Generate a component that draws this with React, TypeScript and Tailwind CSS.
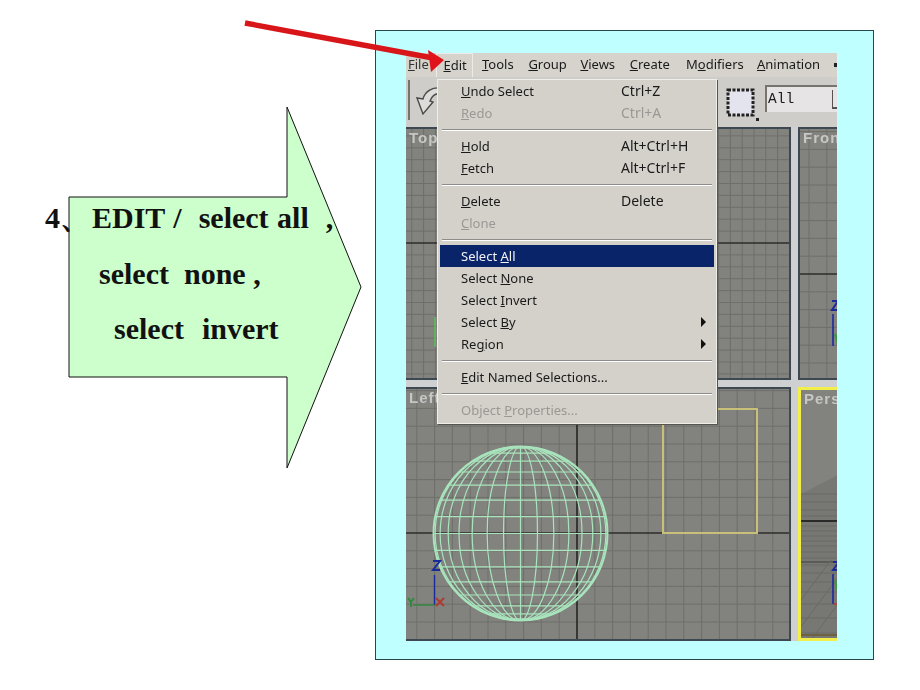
const SERIF = "font-['Liberation_Serif','Times_New_Roman',serif]";

function GridLines({ w, h, ox, oy, stepX = 17.8, stepY = 17.8, axisX, axisY }: { w: number; h: number; ox: number; oy: number; stepX?: number; stepY?: number; axisX?: boolean; axisY?: boolean }) {
  const xs: number[] = [];
  const ys: number[] = [];
  for (let x = ox % stepX; x < w; x += stepX) xs.push(x);
  for (let y = oy % stepY; y < h; y += stepY) ys.push(y);
  return (
    <svg width={w} height={h} className="absolute inset-0">
      {xs.map((x) => (
        <line key={`x${x}`} x1={x} y1={0} x2={x} y2={h} stroke="#6e6e6b" strokeWidth="1" />
      ))}
      {ys.map((y) => (
        <line key={`y${y}`} x1={0} y1={y} x2={w} y2={y} stroke="#6e6e6b" strokeWidth="1" />
      ))}
      {axisX && <line x1={ox} y1={0} x2={ox} y2={h} stroke="#0c0c0c" strokeWidth="1.2" />}
      {axisY && <line x1={0} y1={oy} x2={w} y2={oy} stroke="#0c0c0c" strokeWidth="1.2" />}
    </svg>
  );
}

function Sphere() {
  const c = "#a8e4bc";
  const cx = 114.5;
  const cy = 144.5;
  const r = 87;
  const s = [0.195, 0.383, 0.556, 0.707, 0.831, 0.924, 0.981];
  const lats = [0, ...s, ...s.map((v) => -v)];
  return (
    <svg width="385" height="253" className="absolute inset-0" fill="none" stroke={c} strokeWidth="1.2">
      <circle cx={cx} cy={cy} r={r} strokeWidth="2" />
      <line x1={cx} y1={cy - r} x2={cx} y2={cy + r} />
      {lats.map((l) => {
        const half = Math.sqrt(1 - l * l) * r;
        return <line key={l} x1={cx - half} y1={cy + l * r} x2={cx + half} y2={cy + l * r} />;
      })}
      {s.map((l) => (
        <ellipse key={l} cx={cx} cy={cy} rx={l * r} ry={r} />
      ))}
      <line x1="28.5" y1="186" x2="28.5" y2="216" stroke="#1b2a9a" strokeWidth="1.4" />
      <line x1="7" y1="216" x2="28.5" y2="216" stroke="#2e8a3a" strokeWidth="1.4" />
      <path d="M27 172h7l-7 9h7" stroke="#1b2a9a" strokeWidth="2" />
      <path d="M30 209l8 8M38 209l-8 8" stroke="#b03a30" strokeWidth="2" />
      <path d="M2 209l3 4 3-4M5 213v5" stroke="#2e8a3a" strokeWidth="2" />
    </svg>
  );
}

function Label({ children }: { children: React.ReactNode }) {
  return <span className="absolute left-[3px] top-[-2px] text-[15px] font-bold tracking-[1px] text-[#c6c6c4] font-['Liberation_Sans',sans-serif]">{children}</span>;
}

function Viewport({ className = "", children }: { className?: string; children?: React.ReactNode }) {
  return <div className={`relative overflow-hidden bg-[#82827e] ${className}`}>{children}</div>;
}

type Item = { label: React.ReactNode; shortcut?: string; disabled?: boolean; active?: boolean; sub?: boolean };

function MenuRow({ label, shortcut, disabled, active, sub }: Item) {
  return (
    <div className={`relative flex h-[22px] items-center pl-[21px] ${active ? "bg-[#0a246a] text-[#f2f2f2]" : disabled ? "text-[#9a9894]" : "text-[#1a1a1a]"}`}>
      <span className="mt-[2px] w-[160px] shrink-0">{label}</span>
      {shortcut && <span className="mb-[2px] text-[14px]">{shortcut}</span>}
      {sub && <span className="absolute right-[8px] h-0 w-0 border-y-[5px] border-l-[5px] border-y-transparent border-l-[#111]" />}
    </div>
  );
}

function Sep() {
  return <div className="mx-[2px] mt-[5px] mb-[4px] h-[2px] border-t border-b border-t-[#8e8c88] border-b-white" />;
}

function EditMenu() {
  return (
    <div className="absolute left-[31px] top-[26px] z-10 w-[280px] border border-[#f0eee9] bg-[#d4d1cb] px-[2px] pb-[2px] text-[13px] font-['Noto_Sans',sans-serif] shadow-[1px_1px_0_#55554f]">
      <MenuRow label={<><u>U</u>ndo Select</>} shortcut="Ctrl+Z" />
      <MenuRow label={<><u>R</u>edo</>} shortcut="Ctrl+A" disabled />
      <Sep />
      <MenuRow label={<><u>H</u>old</>} shortcut="Alt+Ctrl+H" />
      <MenuRow label={<><u>F</u>etch</>} shortcut="Alt+Ctrl+F" />
      <Sep />
      <MenuRow label={<><u>D</u>elete</>} shortcut="Delete" />
      <MenuRow label={<><u>C</u>lone</>} disabled />
      <Sep />
      <MenuRow label={<>Select <u>A</u>ll</>} active />
      <MenuRow label={<>Select <u>N</u>one</>} />
      <MenuRow label={<>Select <u>I</u>nvert</>} />
      <MenuRow label={<>Select <u>B</u>y</>} sub />
      <MenuRow label={<>Re<u>g</u>ion</>} sub />
      <Sep />
      <MenuRow label={<><u>E</u>dit Named Selections...</>} />
      <Sep />
      <MenuRow label={<>Object <u>P</u>roperties...</>} disabled />
    </div>
  );
}

function AppShot() {
  return (
    <div className="relative flex h-[588px] w-[431px] flex-col overflow-hidden bg-[#d4d1cb] font-['Noto_Sans',sans-serif] text-[13px] text-[#1a1a1a] blur-[0.4px]">
      <div className="flex h-[24px] shrink-0 items-center whitespace-nowrap bg-[#d6d3cd]">
        <span className="ml-[2px] w-[29px] text-[#333]"><u>F</u>ile</span>
        <span className="h-[24px] w-[37px] border border-b-0 border-[#ecebe6] pl-[6px] leading-[23px]"><u>E</u>dit</span>
        <span className="ml-[9px] w-[33px]"><u>T</u>ools</span>
        <span className="ml-[14px] w-[38px]"><u>G</u>roup</span>
        <span className="ml-[14px] w-[36px]"><u>V</u>iews</span>
        <span className="ml-[14px] w-[43px]"><u>C</u>reate</span>
        <span className="ml-[14px] w-[57px]">M<u>o</u>difiers</span>
        <span className="ml-[14px] w-[61px]"><u>A</u>nimation</span>
        <span className="ml-[16px] h-[4px] w-[3px] shrink-0 bg-[#222]" />
      </div>
      <div className="relative h-[50px] shrink-0 bg-[#cfcdc9]">
        <div className="absolute left-[2px] top-[3px] h-[40px] w-[2px] bg-[#77736d]" />
        <svg width="24" height="30" viewBox="0 0 24 30" className="absolute left-[10px] top-[9px]">
          <path d="M7 28 L1 12 L7 13 C9 5 17 1 24 2 L24 8 C19 7 16 10 14 15 L17 16 Z" fill="#dcdcda" stroke="#4c4a47" strokeWidth="1.4" />
        </svg>
        <svg width="33" height="33" viewBox="0 0 33 33" className="absolute left-[320px] top-[11px]">
          <rect x="2" y="2" width="25" height="25" fill="#e4e4ee" stroke="#222" strokeWidth="3" strokeDasharray="3 1.5" />
          <rect x="30" y="30" width="3" height="3" fill="#222" />
        </svg>
        <div className="absolute left-[359px] top-[8px] flex h-[27px] w-[72px] items-center border-l-2 border-t-2 border-[#77736d] bg-[#e6e4e4] pl-[1px] font-['Liberation_Mono',monospace] text-[14.5px]">All</div>
        <div className="absolute left-[426px] top-[13px] h-[19px] w-[5px] border-l border-b-2 border-[#55534f]" />
      </div>
      <div className="grid min-h-0 flex-1 grid-cols-[385px_39px] gap-x-[7px] gap-y-[7px] bg-[#cfd0d2] [grid-template-rows:253px_254px]">
        <Viewport className="border-r-2 border-t-2 border-b-2 border-[#3d4850]">
          <GridLines w={385} h={253} ox={171} oy={114} stepX={11.8} stepY={11.9} axisX axisY />
          <Label>Top</Label>
          <div className="absolute left-[28px] top-[188px] h-[30px] w-[2px] bg-[#62b060]" />
        </Viewport>
        <Viewport className="border-l-2 border-t-2 border-b-2 border-[#3d4850]">
          <GridLines w={39} h={253} ox={9} oy={145} axisY />
          <Label>Fron</Label>
          <svg width="39" height="253" className="absolute inset-0" fill="none">
            <line x1="33" y1="185" x2="33" y2="217" stroke="#1b2a9a" strokeWidth="1.6" />
            <line x1="35" y1="205" x2="39" y2="217" stroke="#3a9a40" strokeWidth="2.5" />
            <path d="M32 172h6l-6 9h6" stroke="#1b2a9a" strokeWidth="2" />
          </svg>
        </Viewport>
        <Viewport className="border-r-2 border-t-2 border-b-2 border-[#3d4850]">
          <GridLines w={385} h={253} ox={171} oy={144} axisX axisY />
          <Sphere />
          <div className="absolute left-[256px] top-[19px] h-[126px] w-[96px] border-2 border-[#c8bf78]" />
          <Label>Left</Label>
        </Viewport>
        <Viewport className="border-[3px] border-r-0 border-[#f2ee4a]">
          <svg width="39" height="250" className="absolute inset-0" fill="none" stroke="#6a6a65" strokeWidth="1">
            <path d="M0 104 L39 84 V250 H0 Z" fill="#777774" stroke="none" />
            {[104, 112, 120, 126, 136, 141, 146, 151, 156, 162, 168, 175, 183, 192, 202, 214, 228, 243].map((y) => (
              <line key={y} x1="0" y1={y} x2="39" y2={y} />
            ))}
            <line x1="0" y1="172" x2="32" y2="172" stroke="#3e3e3c" />
            {[-30, -10, 10].map((x) => (
              <line key={x} x1={x} y1="250" x2={x + 60} y2="170" />
            ))}
            <line x1="0" y1="131" x2="39" y2="131" stroke="#111" strokeWidth="1.4" />
            <line x1="0" y1="245" x2="39" y2="245" stroke="#6e6242" strokeWidth="2" />
            <line x1="32" y1="184" x2="32" y2="214" stroke="#1b2a9a" strokeWidth="1.6" />
            <line x1="32" y1="214" x2="38" y2="214" stroke="#b03a30" strokeWidth="1.4" />
            <line x1="34" y1="190" x2="38" y2="206" stroke="#3a9a40" strokeWidth="2" />
            <path d="M32 172h6l-6 8h6" stroke="#1b2a9a" strokeWidth="2" />
          </svg>
          <Label>Pers</Label>
        </Viewport>
      </div>
      <EditMenu />
    </div>
  );
}

export default function App() {
  return (
    <div className="relative h-[690px] w-[920px] overflow-hidden bg-white">
      <svg width="361" height="362" viewBox="0 0 361 362" className="absolute left-[1px] top-[106px]">
        <polygon points="68,91 286,91 286,1 360,181 286,362 286,271 68,271" fill="#ccffcc" stroke="#111" strokeWidth="1" />
      </svg>
      <div className={`absolute left-[45px] top-[190px] whitespace-pre text-[30px] font-bold leading-[55.5px] text-[#111] ${SERIF}`}>
        <div>4、<span className="ml-[2px] [word-spacing:1px]">{"EDIT /  select all  ,"}</span></div>
        <div className="pl-[54px]">{"select  none ,"}</div>
        <div className="pl-[69px] [word-spacing:1.5px]">{"select  invert"}</div>
      </div>
      <div className="absolute left-[375px] top-[30px] h-[630px] w-[499px] border border-[#24484c] bg-[#c0ffff] pl-[30px] pt-[22px]">
        <AppShot />
      </div>
      <svg width="215" height="70" viewBox="0 0 215 70" className="absolute left-[235px] top-[12px] z-20">
        <line x1="10" y1="11" x2="198" y2="46" stroke="#d8161a" strokeWidth="5.5" />
        <polygon points="193,38 209,48 196,60" fill="#e0121a" />
      </svg>
    </div>
  );
}
